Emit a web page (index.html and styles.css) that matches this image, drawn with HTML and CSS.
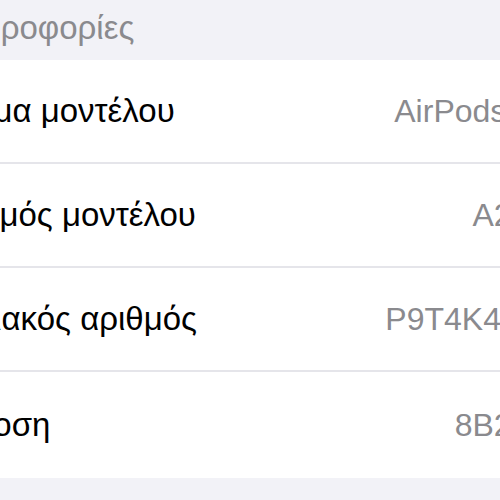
FILE: index.html
```html
<!DOCTYPE html>
<html lang="el">

<head>
    <meta charset="UTF-8">
    <title>Πληροφορίες</title>
    <link rel="stylesheet" href="styles.css">
</head>

<body>
    <div class="page">
        <div class="section-header">Πληροφορίες</div>

        <div class="list">
            <div class="row">
                <span class="label">Όνομα μοντέλου</span>
                <span class="value">AirPods Pro</span>
            </div>
            <div class="row">
                <span class="label">Αριθμός μοντέλου</span>
                <span class="value">A2084</span>
            </div>
            <div class="row">
                <span class="label">Σειριακός αριθμός</span>
                <span class="value">P9T4K4XQ1</span>
            </div>
            <div class="row">
                <span class="label">Έκδοση</span>
                <span class="value">8B2834</span>
            </div>
        </div>

        <div class="section-footer"></div>
    </div>
</body>

</html>
```

FILE: styles.css
```css
body {
    margin: 0;
    background: #f2f2f7;
    overflow: hidden;
    font-family: "Liberation Sans", Arial, "Noto Sans", sans-serif;
}

/* the screen is wider than the window, so both sides are cut */
.page {
    width: 700px;
    margin-left: -100px;
}

.section-header {
    height: 60px;
    box-sizing: border-box;
    padding: 8px 16px 0 42px;
    font-size: 33px;
    line-height: 40px;
    color: #8a8a8e;
    white-space: nowrap;
}

.list {
    background: #fff;
}

.row {
    display: flex;
    justify-content: space-between;
    align-items: center;
    height: 102px;
    padding: 0 35px 0 33px;
    border-bottom: 2px solid #e5e5ea;
    white-space: nowrap;
}

.row:last-child {
    border-bottom: none;
    height: 106px;
}

.label {
    font-size: 33px;
    color: #000;
}

.value {
    font-size: 32px;
    color: #8a8a8e;
}

.section-footer {
    height: 40px;
}
```
